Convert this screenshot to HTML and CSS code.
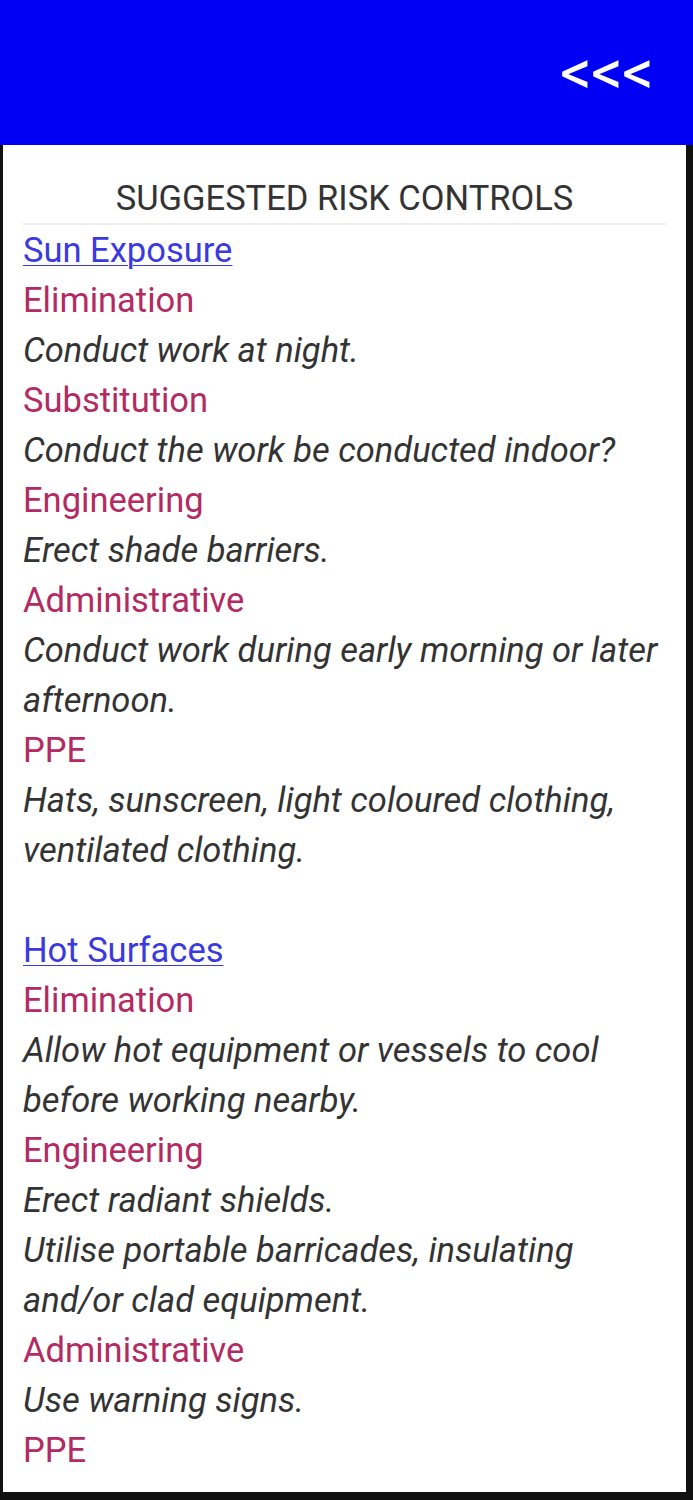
FILE: index.html
```html
<!DOCTYPE html>
<html lang="en">

<head>
  <meta charset="UTF-8" />
  <meta name="viewport" content="width=device-width, initial-scale=1.0" />
  <title>Risk Controls</title>
  <link rel="stylesheet" href="styles.css">
</head>

<body>
  <div class="screen">
    <div class="topbar">
      <span class="back">&lt;&lt;&lt;</span>
    </div>
    <div class="panel">
      <div class="title">SUGGESTED RISK CONTROLS</div>

      <div class="hazard">
        <a class="hazard-name" href="#">Sun Exposure</a>
        <div class="level">Elimination</div>
        <div class="control">Conduct work at night.</div>
        <div class="level">Substitution</div>
        <div class="control">Conduct the work be conducted indoor?</div>
        <div class="level">Engineering</div>
        <div class="control">Erect shade barriers.</div>
        <div class="level">Administrative</div>
        <div class="control">Conduct work during early morning or later afternoon.</div>
        <div class="level">PPE</div>
        <div class="control">Hats, sunscreen, light coloured clothing, ventilated clothing.</div>
      </div>

      <div class="hazard">
        <a class="hazard-name" href="#">Hot Surfaces</a>
        <div class="level">Elimination</div>
        <div class="control">Allow hot equipment or vessels to cool before working nearby.</div>
        <div class="level">Engineering</div>
        <div class="control">Erect radiant shields.</div>
        <div class="control">Utilise portable barricades, insulating and/or clad equipment.</div>
        <div class="level">Administrative</div>
        <div class="control">Use warning signs.</div>
        <div class="level">PPE</div>
      </div>
    </div>
  </div>
</body>

</html>
```

FILE: styles.css
```css
* {
  box-sizing: border-box;
}

html,
body {
  margin: 0;
  height: 100%;
}

body {
  background: #111;
  font-family: Roboto, 'Liberation Sans', sans-serif;
}

.screen {
  height: 1500px;
  display: flex;
  flex-direction: column;
  overflow: hidden;
}

.topbar {
  height: 145px;
  flex: none;
  background: #0000f5;
  display: flex;
  justify-content: flex-end;
  align-items: center;
  padding: 0 40px 0 0;
}

.back {
  color: white;
  font-size: 63px;
  line-height: 1;
  letter-spacing: -1px;
}

.panel {
  flex: 1;
  background: white;
  margin: 0 7px 8px 3px;
  padding: 28px 0 0 20px;
  overflow: hidden;
  font-size: 34.5px;
  line-height: 50px;
}

.title {
  color: #333;
  text-align: center;
  margin-right: 20px;
  border-bottom: 2px solid #eee;
  height: 52px;
  line-height: 50px;
}

.hazard {
  padding-right: 10px;
}

.hazard + .hazard {
  margin-top: 50px;
}

.hazard-name {
  color: #3a3ae0;
  text-decoration: underline;
  text-decoration-thickness: 1px;
  text-underline-offset: 3px;
}

.level {
  color: #b42a63;
}

.control {
  color: #333;
  font-style: italic;
}
```
